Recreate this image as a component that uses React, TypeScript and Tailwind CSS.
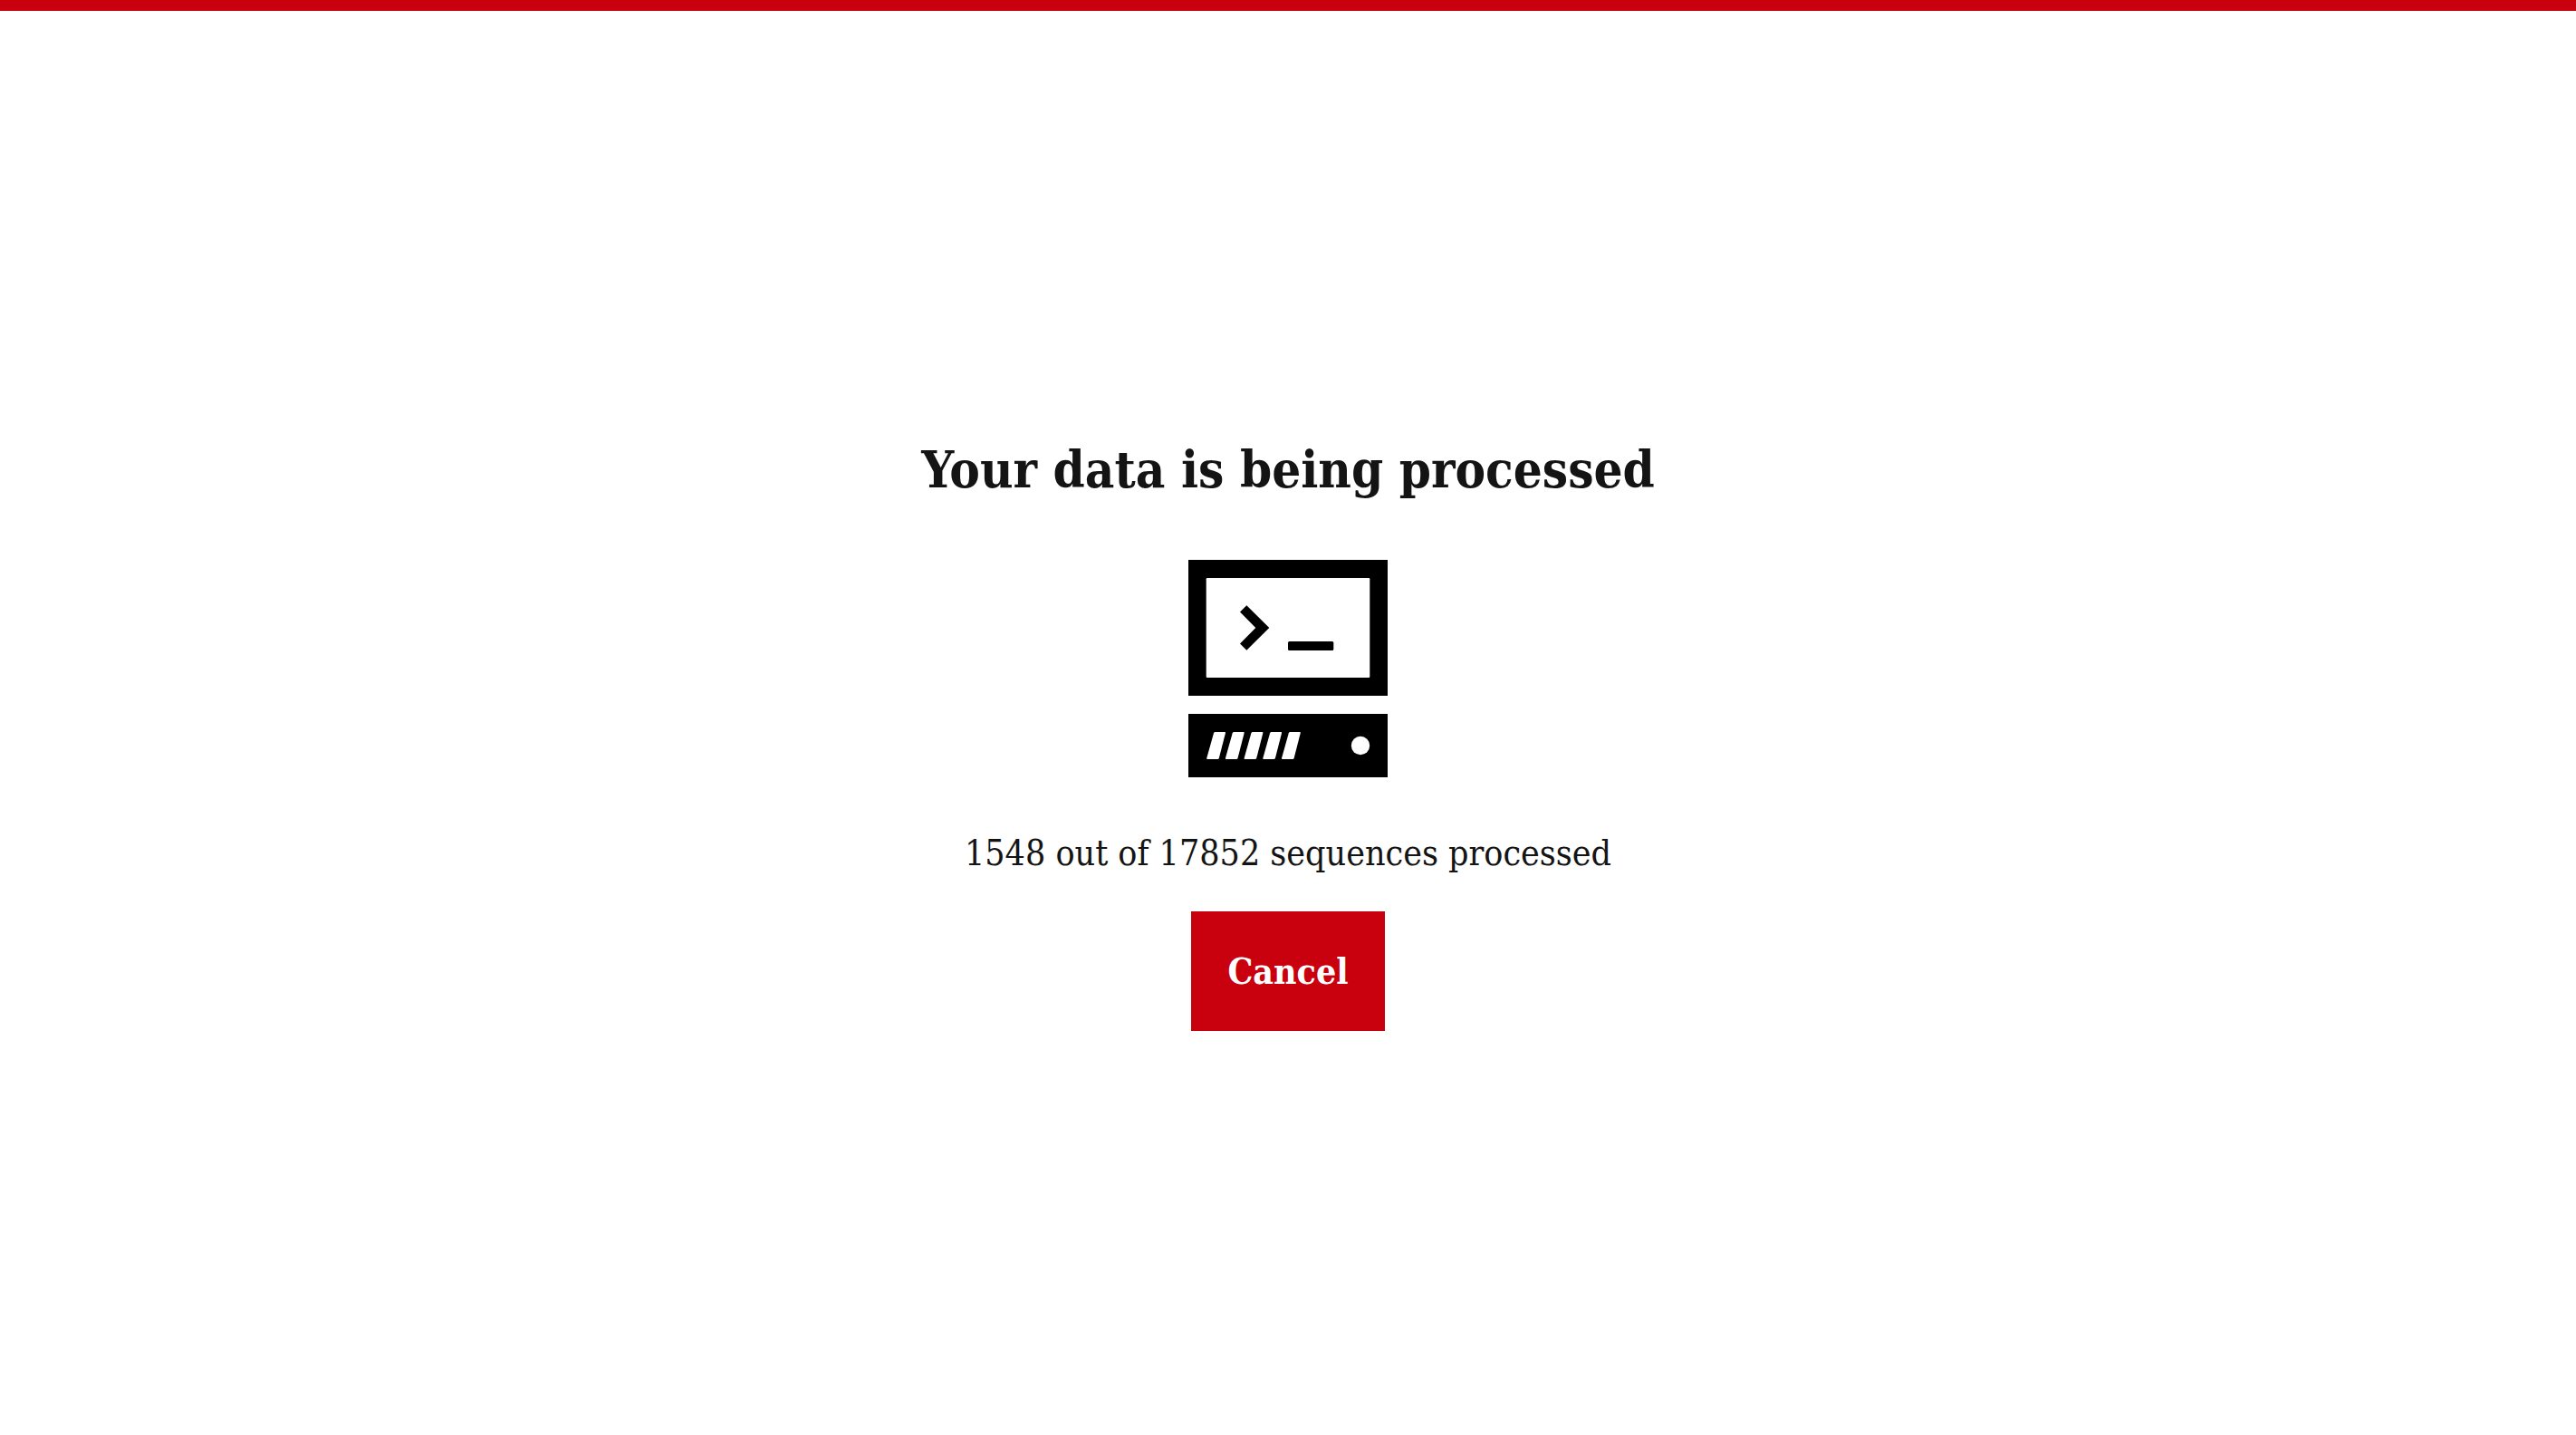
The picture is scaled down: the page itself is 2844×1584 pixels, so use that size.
function ComputerIcon() {
  return (
    <svg viewBox="0 0 220 240" className="h-60 w-55" fill="black" aria-hidden="true">
      <rect width="220" height="150" />
      <rect x="19.7" y="20" width="180.6" height="110" rx="1.2" fill="white" />
      <path d="M57 57.6 64.3 50.3 89.3 75 64.3 99.7 57 92.6 74.3 75Z" />
      <rect x="110" y="90" width="50.3" height="10" rx="1.5" />
      <rect y="170" width="220" height="70" />
      {[0, 20.7, 41.4, 62.1, 82.8].map((x) => (
        <path
          key={x}
          transform={`translate(${x} 0)`}
          d="M29.6 190H40.2Q41.2 190 41 191L33.8 219Q33.4 220 32.4 220H21Q20 220 20.2 219L28 191.2Q28.4 190 29.6 190Z"
          fill="white"
        />
      ))}
      <circle cx="190" cy="205" r="10.2" fill="white" />
    </svg>
  );
}

export default function App() {
  const processed = 1548;
  const total = 17852;

  return (
    <div className="flex min-h-screen flex-col border-t-12 border-[#c9000d] bg-white font-['Roboto_Slab','DejaVu_Serif_Condensed','DejaVu_Serif',serif] text-[#141414]">
      <main className="flex flex-1 flex-col items-center justify-center pt-5">
        <h1 className="text-center text-[56px] leading-20 font-bold">Your data is being processed</h1>
        <div className="mt-15">
          <ComputerIcon />
        </div>
        <p className="mt-15 text-center text-[39px] leading-12" role="status">
          {processed} out of {total} sequences processed
        </p>
        <button type="button" className="mt-10 bg-[#c9000d] px-10 py-10 text-[39px] leading-13 font-bold text-white">
          Cancel
        </button>
      </main>
    </div>
  );
}
